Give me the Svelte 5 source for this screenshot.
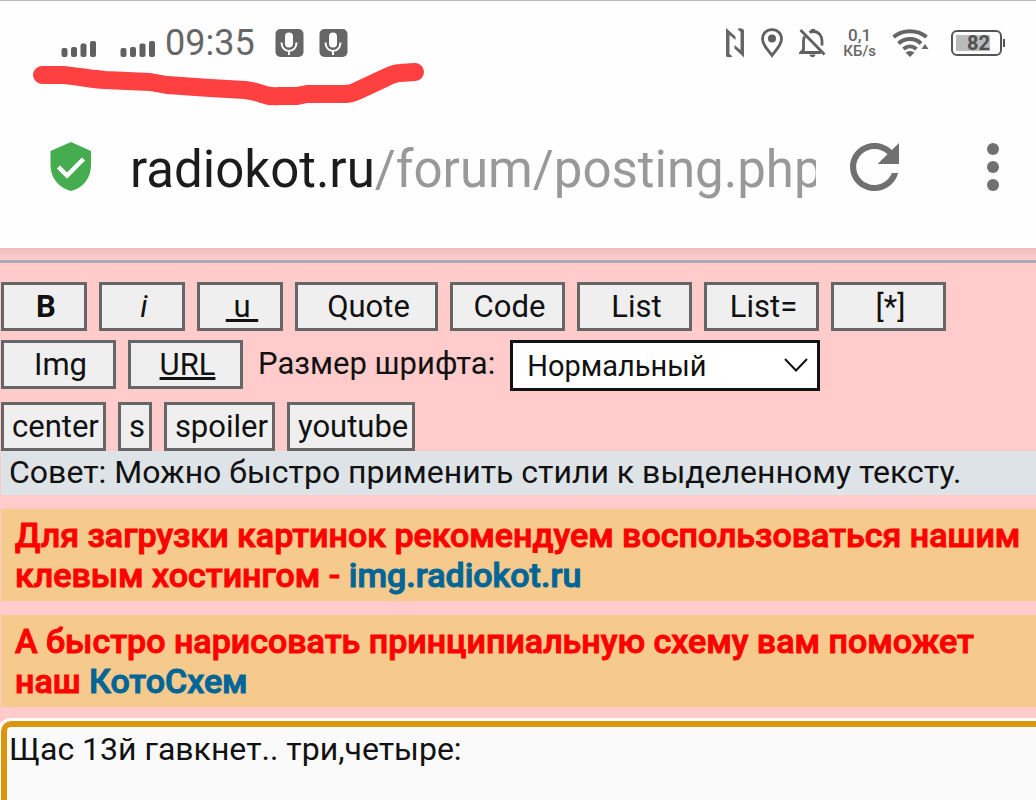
<script>
  const mainTools = [
    { text: 'B', kind: 'small bold' },
    { text: 'i', kind: 'small italic' },
    { text: '\u00a0u\u00a0', kind: 'small underline' },
    { text: 'Quote', kind: 'large' },
    { text: 'Code', kind: 'medium' },
    { text: 'List', kind: 'medium' },
    { text: 'List=', kind: 'medium' },
    { text: '[*]', kind: 'medium' }
  ];
  const linkTools = [
    { text: 'Img', kind: 'medium' },
    { text: 'URL', kind: 'medium underline' }
  ];
  const extraTools = ['center', 's', 'spoiler', 'youtube'];
  let size = $state('normal');
  let message = $state('Щас 13й гавкнет.. три,четыре:');
</script>

{#snippet signal()}
  <svg width="36" height="17" viewBox="0 0 36 17" fill="#606060" aria-hidden="true">
    <rect x="0.500" y="8" width="6" height="9" rx="2" />
    <rect x="10" y="7" width="6" height="10" rx="2" />
    <rect x="19.500" y="3.500" width="6" height="13.500" rx="2" />
    <rect x="29" y="1" width="6" height="16" rx="2" />
  </svg>
{/snippet}

{#snippet mic()}
  <svg width="29" height="28" viewBox="0 0 29 28" aria-hidden="true">
    <rect x="0.5" y="0" width="28" height="28" rx="5" fill="#666" />
    <rect x="10" y="3.500" width="8" height="15" rx="4" fill="#fff" />
    <path d="M6.500 13.500c0 5 3.200 8.500 7.500 8.500s7.500-3.500 7.500-8.500M14 22v4" fill="none" stroke="#fff" stroke-width="2" />
  </svg>
{/snippet}

<div class="screen">
  <header>
    <div class="status">
      <div class="left">
        {@render signal()}
        {@render signal()}
        <time>09:35</time>
        {@render mic()}
        {@render mic()}
      </div>
      <div class="right">
        <svg width="20" height="30" viewBox="0 0 20 30" fill="#666" aria-hidden="true">
          <path d="M1 0l9.500 8.500v3.500L4.500 7V26l3 2.500c-2 1-4.500 1-6.500 0z" />
          <path d="M19 29.500l-9.500-9v-3.500L15.500 22V4l-3-3c2-1.500 4.500-1 6.500 1z" />
        </svg>
        <svg width="22" height="30" viewBox="0 0 22 30" aria-hidden="true">
          <path d="M11 1.700c-5.500 0-9.500 4-9.500 9.300 0 6 5.500 11 9.500 16.500C15 22 20.500 17 20.500 11c0-5.300-4-9.300-9.500-9.300z" fill="none" stroke="#606060" stroke-width="2.800" />
          <circle cx="11" cy="10.500" r="4" fill="#606060" />
        </svg>
        <svg width="28" height="30" viewBox="0 0 28 30" fill="none" stroke="#606060" stroke-width="2.800" aria-hidden="true">
          <path d="M1.500 2l24 24.500M5.500 8.500C4.500 10.500 4.500 12 4.500 14v8L2 24.500h20M10.500 4.500c1-.7 2-1 3.500-1 6 0 9 4.500 9 9.500v4.500" />
          <path d="M12 1h4v3h-4zM10.500 26.500h6c-.5 3.500-5.500 3.500-6 0z" fill="#606060" stroke="none" />
        </svg>
        <div class="speed"><span>0,1</span><span class="unit">КБ/s</span></div>
        <svg width="37" height="28" viewBox="0 0 37 28" fill="none" stroke="#666" stroke-width="4" aria-hidden="true">
          <path d="M1.500 8C11 .2 25 .2 34.500 8M6.500 14.500C13 8.500 23 8.500 29 14.500M11.500 20c4-3.500 9-3.500 13 0" />
          <path d="M13.500 23.500c3-2 6-2 9 0L18 28zM29.500 20l3.500-5 3.500 5z" fill="#666" stroke="none" />
        </svg>
        <div class="battery"><b>82</b></div>
      </div>
    </div>
    <svg class="scribble" width="400" height="50" viewBox="0 0 400 50" fill="none" stroke="#ff4041" stroke-width="18" stroke-linecap="round" stroke-linejoin="round" aria-hidden="true">
      <path d="M17 18h20C52 19 65 22 80 23l45 2 17 3 43 3 35 2q9 1 17 4t17 2h18l10-2h38q6 0 12-3l30-14q8-4 13-4l15-1" />
    </svg>
    <div class="address">
      <svg width="42" height="50" viewBox="0 0 42 50" aria-hidden="true">
        <path d="M21 0L0.500 9v14C0.500 36 9 46 21 49 33 46 41 36 41 23V9z" fill="#45ad50" />
        <path d="M8.500 25l8.500 8.500L33.500 17" fill="none" stroke="#fff" stroke-width="4.500" />
      </svg>
      <a class="url" href="#address"><span>radiokot.ru</span>/forum/posting.php</a>
      <button class="icon" aria-label="Обновить">
        <svg width="49" height="48" viewBox="4 4 16 16" preserveAspectRatio="none" fill="#707070" aria-hidden="true">
          <path d="M17.650 6.350C16.200 4.900 14.210 4 12 4c-4.420 0-7.990 3.580-7.990 8s3.570 8 7.990 8c3.730 0 6.840-2.550 7.730-6h-2.080c-.82 2.330-3.040 4-5.650 4-3.310 0-6-2.690-6-6s2.690-6 6-6c1.660 0 3.140.69 4.220 1.780L13 11h7V4z" />
        </svg>
      </button>
      <button class="icon menu" aria-label="Меню">
        <svg width="14" height="48" viewBox="0 0 14 48" fill="#707070" aria-hidden="true">
          <circle cx="7" cy="6" r="6" /><circle cx="7" cy="24" r="6" /><circle cx="7" cy="42" r="6" />
        </svg>
      </button>
    </div>
  </header>

  <main>
    <div class="rule"></div>
    <div class="tools">
      {#each mainTools as tool}
        <button class="tool {tool.kind}">{tool.text}</button>
      {/each}
    </div>
    <div class="tools second">
      {#each linkTools as tool}
        <button class="tool {tool.kind}">{tool.text}</button>
      {/each}
      <label for="font-size">Размер шрифта:</label>
      <div class="select">
        <select id="font-size" bind:value={size}>
          <option value="normal">Нормальный</option>
        </select>
        <svg width="24" height="14" viewBox="0 0 24 14" fill="none" stroke="#111" stroke-width="2" aria-hidden="true">
          <path d="M1 1l11 11.500L23 1" />
        </svg>
      </div>
    </div>
    <div class="tools third">
      {#each extraTools as text}
        <button class="tool">{text}</button>
      {/each}
    </div>
    <p class="tip">Совет: Можно быстро применить стили к выделенному тексту.</p>
    <p class="notice">Для загрузки картинок рекомендуем воспользоваться нашим клевым хостингом - <a href="#hosting">img.radiokot.ru</a></p>
    <p class="notice">А быстро нарисовать принципиальную схему вам поможет наш <a href="#scheme">КотоСхем</a></p>
    <textarea aria-label="Сообщение" bind:value={message}></textarea>
  </main>
</div>

<style>
  :global(body) { margin: 0; }
  * { box-sizing: border-box; }
  svg { display: block; flex: none; }
  .screen {
    display: flex;
    flex-direction: column;
    height: 100vh;
    overflow: hidden;
    font-family: Roboto, sans-serif;
    font-size: 31px;
    color: #111;
    background: #ffcbcb;
  }
  header {
    position: relative;
    flex: none;
    background: #fefefe;
    border-top: 1px solid #bbb;
  }
  .status {
    display: flex;
    justify-content: space-between;
    align-items: center;
    height: 84px;
    padding: 0 34px 0 61px;
    color: #666;
  }
  .left, .right { display: flex; }
  .left { align-items: flex-end; gap: 15px; }
  .left svg:first-child { margin-right: 8px; }
  time {
    font-size: 36px;
    line-height: 28px;
    margin: 0 5px 0 -6px;
  }
  .right { align-items: center; gap: 16px; }
  .speed {
    display: flex;
    flex-direction: column;
    align-items: center;
    font-size: 17px;
    font-weight: 500;
    line-height: 16px;
  }
  .unit { font-size: 15px; }
  .battery {
    position: relative;
    width: 51px;
    height: 26px;
    margin-left: 6px;
    border: 2px solid #555;
    border-radius: 6px;
    padding: 3px;
  }
  .battery::after {
    content: '';
    position: absolute;
    right: -5px;
    top: 7px;
    width: 2px;
    height: 8px;
    background: #555;
  }
  .battery b {
    display: block;
    width: 34px;
    font-size: 20px;
    line-height: 16px;
    text-align: right;
    color: #505050;
    background: #bbb;
  }
  .scribble {
    position: absolute;
    left: 25px;
    top: 56px;
  }
  .address {
    display: flex;
    align-items: center;
    height: 163px;
    padding: 0 36px 0 50px;
  }
  .url {
    flex: 1;
    min-width: 0;
    margin: 6px 34px 0 38px;
    overflow: hidden;
    white-space: nowrap;
    font-size: 51px;
    line-height: 64px;
    color: #999;
    text-decoration: none;
  }
  .url span { color: #1c1c1c; }
  .icon {
    padding: 0;
    border: 0;
    background: none;
  }
  .menu { margin-left: 87px; }
  main {
    display: flex;
    flex: 1;
    flex-direction: column;
    min-height: 0;
    padding-left: 1px;
    background: linear-gradient(#eebbbd, #ffcbcb 10px);
  }
  .rule {
    flex: none;
    height: 3px;
    margin: 12px 0 19px -1px;
    background: #a9aab8;
  }
  .tools {
    display: flex;
    flex: none;
    align-items: flex-start;
    gap: 12px;
  }
  .second { margin-top: 9px; }
  .third { margin-top: 11px; }
  .tool {
    height: 49px;
    padding: 0 4px 0 8px;
    border: 3px solid #666;
    background: #efefef;
    font: inherit;
    line-height: 40px;
    color: #111;
  }
  .small { width: 86px; }
  .medium { width: 115px; }
  .large { width: 143px; }
  .bold { font-weight: 700; }
  .italic { font-style: italic; }
  .underline {
    text-decoration: underline;
    text-decoration-thickness: 3px;
  }
  label {
    margin: 0 3px;
    line-height: 48px;
  }
  .select { position: relative; }
  select {
    width: 310px;
    height: 51px;
    padding: 0 14px;
    appearance: none;
    border: 3px solid #111;
    border-radius: 0;
    background: #fff;
    font: inherit;
    font-size: 29px;
    color: #111;
  }
  .select svg {
    position: absolute;
    right: 12px;
    top: 18px;
    pointer-events: none;
  }
  p { flex: none; margin: 0; }
  .tip {
    height: 44px;
    padding-left: 8px;
    background: #dee3e7;
    font-size: 32px;
    line-height: 43px;
  }
  .notice {
    margin-top: 14px;
    padding: 6px 0 6px 14px;
    background: #f6ca8c;
    font-size: 34px;
    font-weight: 500;
    line-height: 40px;
    color: #f00;
    -webkit-text-stroke: 1px;
  }
  .notice a {
    color: #006597;
    text-decoration: none;
  }
  textarea {
    flex: 1;
    min-height: 0;
    margin: 14px -20px -20px 0;
    padding: 2px;
    resize: none;
    border: 6px solid #dc960d;
    border-radius: 10px;
    outline: 3px solid #fff;
    background: #fafafa;
    font: inherit;
    font-size: 32px;
    line-height: 40px;
    color: #111;
  }
</style>
